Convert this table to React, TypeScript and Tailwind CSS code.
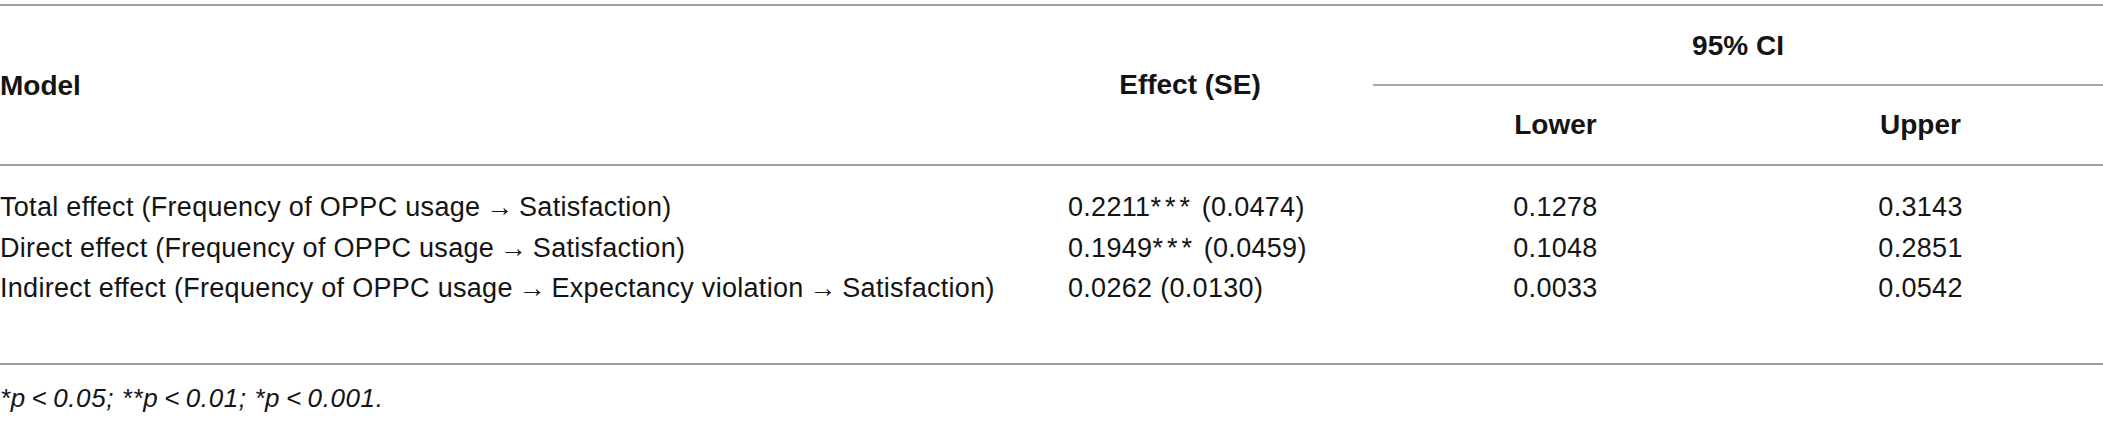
import React from 'react';

type Row = {
  model: string;
  value: string;
  stars?: string;
  se: string;
  lower: string;
  upper: string;
};

const rows: Row[] = [
  {
    model: 'Total effect (Frequency of OPPC usage\u2009\u2192\u2009Satisfaction)',
    value: '0.2211',
    stars: '***',
    se: '(0.0474)',
    lower: '0.1278',
    upper: '0.3143',
  },
  {
    model: 'Direct effect (Frequency of OPPC usage\u2009\u2192\u2009Satisfaction)',
    value: '0.1949',
    stars: '***',
    se: '(0.0459)',
    lower: '0.1048',
    upper: '0.2851',
  },
  {
    model:
      'Indirect effect (Frequency of OPPC usage\u2009\u2192\u2009Expectancy violation\u2009\u2192\u2009Satisfaction)',
    value: '0.0262',
    se: '(0.0130)',
    lower: '0.0033',
    upper: '0.0542',
  },
];

const App: React.FC = () => {
  return (
    <div className="w-[2103px] h-[423px] bg-white pt-[4px] text-[#141414] font-['Liberation_Sans',Arial,sans-serif]">
      <table className="w-full border-collapse table-fixed">
        <colgroup>
          <col className="w-[1007px]" />
          <col className="w-[366px]" />
          <col className="w-[365px]" />
          <col className="w-[365px]" />
        </colgroup>
        <thead className="font-bold text-[28px]">
          <tr className="border-t-2 border-[#a0a0a0]">
            <th rowSpan={2} className="text-left align-middle px-0 pt-[2px]">
              Model
            </th>
            <th rowSpan={2} className="text-center align-middle">
              Effect (SE)
            </th>
            <th colSpan={2} className="h-[80px] pt-[2px] text-center align-middle border-b-2 border-[#a8a8a8]">
              95% CI
            </th>
          </tr>
          <tr className="border-b-2 border-[#a0a0a0]">
            <th className="h-[80px] text-center align-middle">Lower</th>
            <th className="h-[80px] text-center align-middle">Upper</th>
          </tr>
        </thead>
        <tbody className="text-[27px] font-normal tracking-[0.3px]">
          <tr>
            <td colSpan={4} className="h-[22px] p-0" />
          </tr>
          {rows.map((r) => (
            <tr key={r.model} className="h-[40px]">
              <td className="whitespace-nowrap">{r.model}</td>
              <td className="pl-[61px] whitespace-nowrap">
                {r.value}
                {r.stars && <span className="tracking-[4px]">{r.stars}</span>} {r.se}
              </td>
              <td className="text-center">{r.lower}</td>
              <td className="text-center">{r.upper}</td>
            </tr>
          ))}
          <tr className="border-b-2 border-[#a0a0a0]">
            <td colSpan={4} className="h-[55px] p-0" />
          </tr>
        </tbody>
      </table>
      <p className="pt-[19px] text-[26px] italic leading-[28px] tracking-[0.6px]">
        *p{'\u2009<\u2009'}0.05; **p{'\u2009<\u2009'}0.01; *p{'\u2009<\u2009'}0.001.
      </p>
    </div>
  );
};

export default App;
